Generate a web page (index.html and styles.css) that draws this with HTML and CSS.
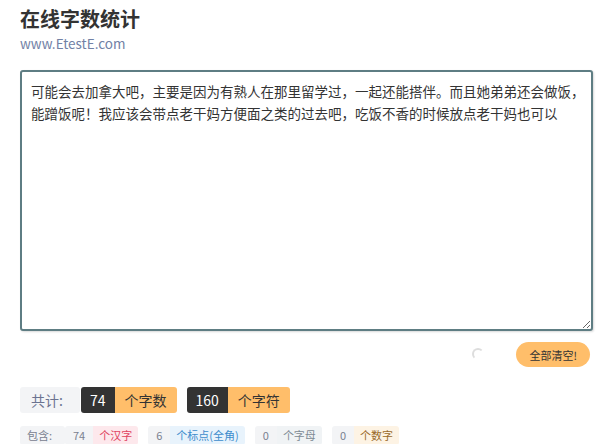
FILE: index.html
```html
<!DOCTYPE html>
<html lang="zh">
<head>
  <meta charset="UTF-8" />
  <title>在线字数统计</title>
  <link rel="stylesheet" href="styles.css">
</head>
<body>
  <div class="page">
    <h1 class="title">在线字数统计</h1>
    <div class="site">www.EtestE.com</div>

    <textarea class="editor">可能会去加拿大吧，主要是因为有熟人在那里留学过，一起还能搭伴。而且她弟弟还会做饭，能蹭饭呢！我应该会带点老干妈方便面之类的过去吧，吃饭不香的时候放点老干妈也可以</textarea>

    <div class="actions">
      <span class="spinner"></span>
      <button class="clear-btn">全部清空!</button>
    </div>

    <div class="total">
      <span class="label">共计:</span>
      <span class="pair"><span class="num">74</span><span class="unit">个字数</span></span>
      <span class="pair"><span class="num">160</span><span class="unit">个字符</span></span>
    </div>

    <div class="detail">
      <span class="label small">包含:</span>
      <span class="tag"><span class="tnum">74</span><span class="tunit red">个汉字</span></span>
      <span class="tag"><span class="tnum">6</span><span class="tunit blue">个标点(全角)</span></span>
      <span class="tag"><span class="tnum">0</span><span class="tunit grey">个字母</span></span>
      <span class="tag"><span class="tnum">0</span><span class="tunit gold">个数字</span></span>
    </div>
  </div>
</body>
</html>
```

FILE: styles.css
```css
body {
  margin: 0;
  padding: 0;
  background: #fff;
  font-family: "Noto Sans CJK SC", "Noto Sans", sans-serif;
  color: #333;
}

.page {
  padding: 4px 7px 0 20px;
}

.title {
  margin: 0;
  font-size: 20px;
  line-height: 29px;
  font-weight: bold;
  color: #333;
}

.site {
  font-size: 13.5px;
  line-height: 20px;
  color: #7181a5;
}

.editor {
  display: block;
  box-sizing: border-box;
  width: 573px;
  height: 261px;
  margin-top: 17px;
  padding: 8px 4px 8px 9px;
  border: 2px solid #5e7d83;
  border-radius: 3px;
  box-shadow: 1px 1px 2px rgba(0, 0, 0, 0.15);
  font-family: "Noto Sans CJK SC", sans-serif;
  font-size: 13.5px;
  line-height: 22px;
  color: #333;
  resize: both;
  outline: none;
}

.actions {
  display: flex;
  justify-content: flex-end;
  align-items: center;
  gap: 30px;
  margin-top: 11px;
  padding-right: 3px;
}

.spinner {
  width: 8px;
  height: 8px;
  border-radius: 50%;
  border: 2px solid transparent;
  border-top-color: #ddd;
  border-left-color: #ddd;
  margin-top: -2px;
  margin-right: 2px;
}

.clear-btn {
  height: 25px;
  padding: 0 13px;
  border: none;
  border-radius: 13px;
  background: #ffbe6a;
  color: #333;
  font-family: "Noto Sans CJK SC", sans-serif;
  font-size: 11px;
}

.total {
  display: flex;
  align-items: center;
  gap: 10px;
  margin-top: 20px;
}

.label {
  display: inline-block;
  box-sizing: border-box;
  width: 60px;
  height: 26px;
  line-height: 26px;
  padding-left: 11px;
  background: #f3f4f6;
  color: #6b7390;
  border-radius: 3px;
  font-size: 14px;
  margin-right: -9px;
}

.pair {
  display: flex;
  height: 26px;
  line-height: 26px;
  font-size: 14px;
  border-radius: 3px;
  overflow: hidden;
}

.num {
  background: #333;
  color: #fff;
  padding: 0 9px;
}

.unit {
  background: #ffbe6a;
  color: #333;
  padding: 0 10px;
}

.detail {
  display: flex;
  align-items: center;
  gap: 10px;
  margin-top: 13px;
}

.label.small {
  width: 45px;
  height: 19px;
  line-height: 19px;
  font-size: 11px;
  padding-left: 7px;
  margin-right: -10px;
  color: #7a8190;
}

.tag {
  display: flex;
  height: 19px;
  line-height: 19px;
  font-size: 11px;
  border-radius: 3px;
  overflow: hidden;
}

.tnum {
  background: #f3f4f6;
  color: #7a8190;
  padding: 0 8px;
}

.tunit {
  padding: 0 6px;
}

.red {
  background: #fde8ec;
  color: #e0435f;
}

.blue {
  background: #e8f3fc;
  color: #3d8ccc;
}

.grey {
  background: #f0f3f5;
  color: #7d8a94;
}

.gold {
  background: #fdf3e4;
  color: #9a6a2a;
}
```
